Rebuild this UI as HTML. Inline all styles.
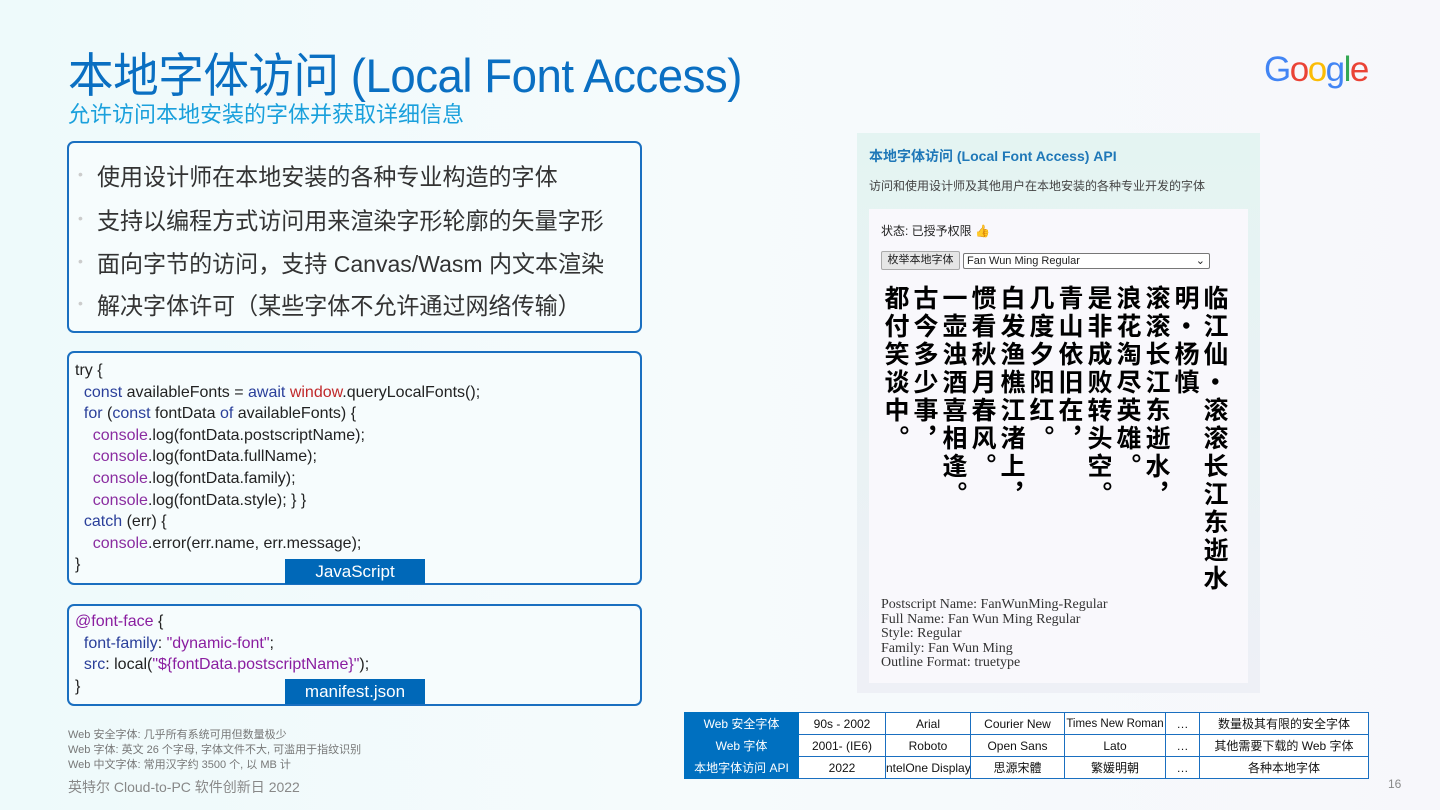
<!DOCTYPE html>
<html><head><meta charset="utf-8">
<style>
*{margin:0;padding:0;box-sizing:border-box}
body{width:1440px;height:810px;overflow:hidden;position:relative;font-family:"Liberation Sans","Noto Sans CJK SC",sans-serif;background:linear-gradient(90deg,#eefafb 0%,#f6fbfc 50%,#f7f7fb 100%)}
.a{position:absolute;white-space:nowrap}
.title{left:68px;top:37px;font-size:47px;color:#0a6fc2;letter-spacing:-0.5px;transform:scaleX(0.97);transform-origin:left}
.sub{left:68px;top:97px;font-size:22px;color:#1aa0dc}
.box{position:absolute;border:2px solid #1a6fc0;border-radius:7px;background:#f6fcfd}
.bl{left:97px;font-size:23.5px;color:#333;transform:scaleX(0.98);transform-origin:left}
.dot{left:78px;font-size:14px;color:#ccc}
.code{font-size:16px;color:#222;line-height:21.6px;font-family:"Liberation Sans",sans-serif}
.k{color:#2a3f9a}.r{color:#c0282a}.p{color:#8a2da0}.s{color:#8a1ea0}
.lab{position:absolute;background:#0068b8;color:#fff;font-size:17px;text-align:center;width:140px;height:25px;line-height:25px}
.note{left:68px;font-size:11px;color:#777}
table{position:absolute;left:684px;top:712px;border-collapse:collapse;font-size:12px;table-layout:fixed;width:684px}
td{border:1px solid #1a6fc0;height:22px;text-align:center;color:#111;padding:0;background:#fff;overflow:hidden;white-space:nowrap}
td.h{background:#0070c0;color:#fff;border-color:#0070c0}
.poem{position:absolute;top:285px;writing-mode:vertical-rl;font-family:"Noto Sans CJK SC",sans-serif;font-weight:bold;font-size:25px;line-height:29px;color:#000;letter-spacing:3px}
.serif{font-family:"Liberation Serif",serif;font-size:14px;color:#333;line-height:14.6px}
</style></head><body>
<div class="a title">本地字体访问 (Local Font Access)</div>
<div class="a sub">允许访问本地安装的字体并获取详细信息</div>
<div class="a" style="left:1264px;top:50px;font-size:35px;font-family:'Liberation Sans',sans-serif;letter-spacing:-1.5px"><span style="color:#4285f4">G</span><span style="color:#ea4335">o</span><span style="color:#fbbc05">o</span><span style="color:#4285f4">g</span><span style="color:#34a853">l</span><span style="color:#ea4335">e</span></div>

<div class="box" style="left:67px;top:141px;width:575px;height:192px"></div>
<div class="a dot" style="top:166px">•</div><div class="a bl" style="top:158px">使用设计师在本地安装的各种专业构造的字体</div>
<div class="a dot" style="top:210px">•</div><div class="a bl" style="top:202px">支持以编程方式访问用来渲染字形轮廓的矢量字形</div>
<div class="a dot" style="top:253px">•</div><div class="a bl" style="top:245px">面向字节的访问，支持 Canvas/Wasm 内文本渲染</div>
<div class="a dot" style="top:295px">•</div><div class="a bl" style="top:287px">解决字体许可（某些字体不允许通过网络传输）</div>

<div class="box" style="left:67px;top:351px;width:575px;height:234px"></div>
<div class="a code" style="left:75px;top:360px">try {<br>&nbsp;&nbsp;<span class="k">const</span> availableFonts = <span class="k">await</span> <span class="r">window</span>.queryLocalFonts();<br>&nbsp;&nbsp;<span class="k">for</span> (<span class="k">const</span> fontData <span class="k">of</span> availableFonts) {<br>&nbsp;&nbsp;&nbsp;&nbsp;<span class="p">console</span>.log(fontData.postscriptName);<br>&nbsp;&nbsp;&nbsp;&nbsp;<span class="p">console</span>.log(fontData.fullName);<br>&nbsp;&nbsp;&nbsp;&nbsp;<span class="p">console</span>.log(fontData.family);<br>&nbsp;&nbsp;&nbsp;&nbsp;<span class="p">console</span>.log(fontData.style); } }<br>&nbsp;&nbsp;<span class="k">catch</span> (err) {<br>&nbsp;&nbsp;&nbsp;&nbsp;<span class="p">console</span>.error(err.name, err.message);<br>}</div>
<div class="lab" style="left:285px;top:559px">JavaScript</div>

<div class="box" style="left:67px;top:604px;width:575px;height:102px"></div>
<div class="a code" style="left:75px;top:611px"><span class="s">@font-face</span> {<br>&nbsp;&nbsp;<span class="k">font-family</span>: <span class="s">"dynamic-font"</span>;<br>&nbsp;&nbsp;<span class="k">src</span>: local(<span class="s">"${fontData.postscriptName}"</span>);<br>}</div>
<div class="lab" style="left:285px;top:679px">manifest.json</div>

<div class="a note" style="top:726px">Web 安全字体: 几乎所有系统可用但数量极少</div>
<div class="a note" style="top:741px">Web 字体: 英文 26 个字母, 字体文件不大, 可滥用于指纹识别</div>
<div class="a note" style="top:756px">Web 中文字体: 常用汉字约 3500 个, 以 MB 计</div>
<div class="a" style="left:68px;top:777px;font-size:14px;color:#888">英特尔 Cloud-to-PC 软件创新日 2022</div>
<div class="a" style="left:1388px;top:777px;font-size:12px;color:#888">16</div>

<div class="a" style="left:857px;top:133px;width:403px;height:560px;background:linear-gradient(180deg,#e4f4f2,#eef0f6)"></div>
<div class="a" style="left:869px;top:146px;font-size:14px;font-weight:bold;color:#1f78b8">本地字体访问 (Local Font Access) API</div>
<div class="a" style="left:869px;top:177px;font-size:12px;color:#444">访问和使用设计师及其他用户在本地安装的各种专业开发的字体</div>
<div class="a" style="left:869px;top:209px;width:379px;height:474px;background:#f9f8fc"></div>
<div class="a" style="left:881px;top:222px;font-size:12px;color:#222">状态: 已授予权限 <span style="color:#e8a000">👍</span></div>
<div class="a" style="left:881px;top:251px;width:79px;height:19px;background:#e6e6e6;border:1px solid #aaa;border-radius:2px;font-size:11px;line-height:17px;text-align:center;color:#222">枚举本地字体</div>
<div class="a" style="left:963px;top:253px;width:247px;height:16px;background:#fff;border:1px solid #777;border-radius:2px;font-size:11px;line-height:14px;padding-left:3px;color:#222">Fan Wun Ming Regular<span style="position:absolute;right:4px;top:0">⌄</span></div>

<div class="poem" style="left:1201px">临江仙‧滚滚长江东逝水</div>
<div class="poem" style="left:1172px">明‧杨慎</div>
<div class="poem" style="left:1143px">滚滚长江东逝水，</div>
<div class="poem" style="left:1114px">浪花淘尽英雄。</div>
<div class="poem" style="left:1085px">是非成败转头空。</div>
<div class="poem" style="left:1056px">青山依旧在，</div>
<div class="poem" style="left:1027px">几度夕阳红。</div>
<div class="poem" style="left:998px">白发渔樵江渚上，</div>
<div class="poem" style="left:969px">惯看秋月春风。</div>
<div class="poem" style="left:940px">一壶浊酒喜相逢。</div>
<div class="poem" style="left:911px">古今多少事，</div>
<div class="poem" style="left:882px">都付笑谈中。</div>

<div class="a serif" style="left:881px;top:598px">Postscript Name: FanWunMing-Regular<br>Full Name: Fan Wun Ming Regular<br>Style: Regular<br>Family: Fan Wun Ming<br>Outline Format: truetype</div>

<table>
<colgroup><col style="width:114px"><col style="width:87px"><col style="width:85px"><col style="width:94px"><col style="width:101px"><col style="width:34px"><col style="width:169px"></colgroup>
<tr><td class="h">Web 安全字体</td><td>90s - 2002</td><td>Arial</td><td>Courier New</td><td style="font-size:11.5px">Times New Roman</td><td>…</td><td>数量极其有限的安全字体</td></tr>
<tr><td class="h">Web 字体</td><td>2001- (IE6)</td><td>Roboto</td><td>Open Sans</td><td>Lato</td><td>…</td><td>其他需要下载的 Web 字体</td></tr>
<tr><td class="h">本地字体访问 API</td><td>2022</td><td style="text-align:right">ntelOne Display</td><td>思源宋體</td><td>繁媛明朝</td><td>…</td><td>各种本地字体</td></tr>
</table>
</body></html>
